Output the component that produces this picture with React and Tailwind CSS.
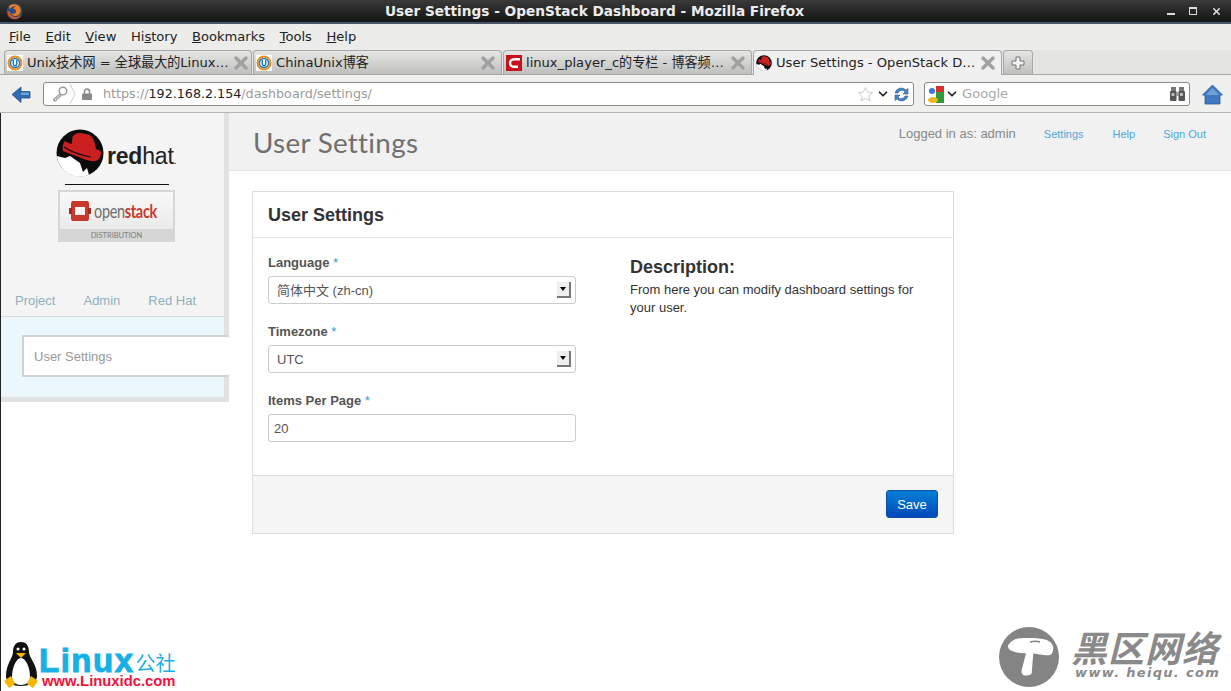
import { ChevronDown, X } from "lucide-react";

const dejavu = "font-['DejaVu_Sans','Noto_Sans_CJK_SC',sans-serif]";
const arial = "font-['Liberation_Sans','Noto_Sans_CJK_SC',sans-serif]";

function UnixIcon() {
  return (
    <svg width="16" height="16" viewBox="0 0 16 16" className="shrink-0">
      <rect width="16" height="16" fill="#fff" />
      <circle cx="8" cy="8" r="6.5" fill="none" stroke="#f08a1d" strokeWidth="2" />
      <circle cx="8" cy="8" r="4.6" fill="none" stroke="#1e78b8" strokeWidth="1.5" />
      <path d="M6.3 5v4a1.7 1.7 0 0 0 3.4 0V5" fill="none" stroke="#1e78b8" strokeWidth="1.5" />
    </svg>
  );
}

function CsdnIcon() {
  return (
    <div className="flex h-4 w-4 shrink-0 items-center justify-center bg-[#c8101a]">
      <svg width="14" height="12" viewBox="0 0 14 12">
        <path d="M13 2.2H7C4.5 2.2 3 4 3 6s1.500 3.800 4 3.800h4" fill="none" stroke="#fff" strokeWidth="2.400" />
      </svg>
    </div>
  );
}

function HatIcon({ size = 16 }) {
  return (
    <svg width={size} height={size} viewBox="0 0 48 48" className="shrink-0">
      <circle cx="24" cy="24" r="23.500" fill="#0b0b0b" />
      <path d="M.7 27 9 29l5-2 10 7 3 9 4-4 2 7A23.500 23.500 0 0 1 .7 27z" fill="#fff" />
      <path d="M17 7c2-2 4-3 6-3 4 0 9 1 12 3 3 3 4 8 5 13 3 1 6 2 5 5-1 4-3 7-6 7-5 1-11-2-16-4-6-2-11-4-16-6-1-4 0-8 2-10 2 1 5 3 7 3 0-3 0-6 1-8z" fill="#cc1f1f" />
      <path d="M8 18c6 4 16 8 27 10" fill="none" stroke="#0b0b0b" strokeWidth="1.200" />
    </svg>
  );
}

function BackIcon() {
  return (
    <svg width="20" height="20" viewBox="0 0 20 20">
      <path d="M1 10.500 10 3v4.500h9v6.500h-9v4.500z" fill="#2f6cb0" stroke="#234f86" strokeWidth=".8" />
      <path d="M10 8.500h8v2.500h-8z" fill="#6a9fd8" />
    </svg>
  );
}

function FirefoxIcon() {
  return (
    <svg width="17" height="17" viewBox="0 0 17 17">
      <circle cx="8.500" cy="8.500" r="8" fill="#2b4a83" />
      <path d="M3 3c0 2 .5 2.500 1 3 1-2 4-3.500 6-2.500-2 .5-2.500 1.500-2.500 2.500 2 0 3 1.500 2.500 3-.5 2-3.500 2.500-5 1 1 3 5 4 7.500 2 2-1.500 2.800-4.500 1.500-7.500C12.500 1.500 7 0 3 3z" fill="#ef7d1a" />
      <path d="M1.500 8.500c0 4 3 7.500 7 7.500s6-2 7-5c-1.500 2.500-4 3.500-6.500 3-3-.5-5.500-3-5-6z" fill="#d9531e" />
    </svg>
  );
}

function Tab({ icon, title, active, width }) {
  return (
    <div
      className={`flex h-[24px] items-center gap-[2px] rounded-t-[4px] border border-b-0 border-[#a8a8a8] pl-[2px] pr-[3px] text-[13.100px] ${width} ${
        active ? "bg-[#f0f0f0]" : "bg-gradient-to-b from-[#e6e6e4] to-[#bfbfbd]"
      }`}
    >
      {icon}
      <span className="ml-[2px] flex-1 whitespace-nowrap text-[#222]">{title}</span>
      <X size={20} strokeWidth={4} className="shrink-0 text-[#a0a0a0]" />
    </div>
  );
}

function BrowserChrome() {
  return (
    <div className={`${dejavu} shrink-0`}>
      <div className="flex h-[24px] items-center border-b-2 border-[#46566a] bg-gradient-to-b from-[#3a3a3a] to-[#141414] pl-[6px] pr-[9px]">
        <FirefoxIcon />
        <div className="flex-1 pr-[1px] text-center text-[13.670px] font-bold text-[#ececec]">
          User Settings - OpenStack Dashboard - Mozilla Firefox
        </div>
        <div className="flex items-center gap-[14px] text-[#ddd]">
          <div className="mt-[6px] h-[2px] w-[8px] bg-[#ddd]" />
          <div className="h-[8px] w-[8px] border border-t-2 border-[#ddd]" />
          <X size={11} strokeWidth={3.500} />
        </div>
      </div>
      <div className="flex h-[26px] items-center gap-[14.500px] bg-[#ececea] pl-[9px] text-[13.100px] text-[#222]">
        <span><u>F</u>ile</span>
        <span><u>E</u>dit</span>
        <span><u>V</u>iew</span>
        <span>Hi<u>s</u>tory</span>
        <span><u>B</u>ookmarks</span>
        <span><u>T</u>ools</span>
        <span><u>H</u>elp</span>
      </div>
      <div className="flex h-[25px] items-end gap-[1px] border-b border-[#a8a8a8] bg-[#e4e4e2] pl-[3px]">
        <Tab icon={<UnixIcon />} title="Unix技术网 = 全球最大的Linux…" width="w-[248px] ml-[1px]" />
        <Tab icon={<UnixIcon />} title="ChinaUnix博客" width="w-[249px]" />
        <Tab icon={<CsdnIcon />} title="linux_player_c的专栏 - 博客频…" width="w-[249px]" />
        <Tab icon={<HatIcon />} title="User Settings - OpenStack D…" width="w-[249px] -mb-[1px] h-[25px]" active />
        <div className="flex h-[24px] w-[30px] items-center justify-center rounded-t-[4px] border border-b-0 border-[#a8a8a8] bg-gradient-to-b from-[#e6e6e4] to-[#bfbfbd]">
          <svg width="14" height="14" viewBox="0 0 14 14">
            <path d="M5 1h4v4h4v4H9v4H5V9H1V5h4z" fill="#f2f2f2" stroke="#777" />
          </svg>
        </div>
      </div>
      <div className="flex h-[38px] items-center border-b border-[#b5b5b5] bg-[#efefed] pl-[11px] pr-[7px] pt-[1px]">
        <BackIcon />
        <div className="ml-[12px] flex h-[24px] w-[871px] items-center rounded-[3px] border border-[#8a8a8a] bg-white pl-[7px] pr-[3px] text-[14px]">
          <svg width="18" height="16" viewBox="0 0 18 16" className="shrink-0">
            <circle cx="12" cy="5" r="3.800" fill="none" stroke="#999" strokeWidth="1.400" />
            <path d="M9 8 2.500 13.500l1 1.500 2-1 .5-1.500 1.500-.5 3-3" fill="none" stroke="#999" strokeWidth="1.300" />
          </svg>
          <svg width="8" height="22" viewBox="0 0 8 22" className="shrink-0">
            <path d="M1 1l5 10-5 10" fill="none" stroke="#ccc" />
          </svg>
          <svg width="10" height="12" viewBox="0 0 10 12" className="ml-[5px] shrink-0">
            <path d="M2.500 6V3.500a2.500 2.500 0 0 1 5 0V6" fill="none" stroke="#888" strokeWidth="1.500" />
            <rect y="5.500" width="10" height="6.500" rx="1" fill="#888" />
          </svg>
          <div className="ml-[11px] flex-1 whitespace-nowrap text-[12.700px] text-[#9a9a9a]">
            https://<span className="text-[#222]">192.168.2.154</span>/dashboard/settings/
          </div>
          <svg width="17" height="17" viewBox="0 0 17 17" className="shrink-0">
            <path d="m8.500 1.500 2.100 4.600 5 .5-3.800 3.300 1.100 5-4.400-2.600-4.400 2.600 1.100-5L1.400 6.600l5-.5z" fill="#fff" stroke="#ccc" />
          </svg>
          <ChevronDown size={14} strokeWidth={3} className="ml-[2px] text-[#222]" />
          <svg width="17" height="17" viewBox="0 0 17 17" className="ml-[3px] shrink-0">
            <path d="M2 7a6.500 6.500 0 0 1 11-3l2-1.500V8h-5l2-2A4 4 0 0 0 5 7z" fill="#4b82bd" stroke="#2c5f9a" strokeWidth=".6" />
            <path d="M15 10A6.500 6.500 0 0 1 4 13l-2 1.500V9h5l-2 2a4 4 0 0 0 7-1z" fill="#4b82bd" stroke="#2c5f9a" strokeWidth=".6" />
          </svg>
        </div>
        <div className="ml-[10px] flex h-[24px] w-[266px] items-center rounded-[3px] border border-[#8a8a8a] bg-white pl-[3px] pr-[2px] text-[13.100px]">
          <svg width="16" height="17" viewBox="0 0 16 17" className="shrink-0">
            <rect width="16" height="17" rx="1" fill="#fff" />
            <rect x="8" width="8" height="6" fill="#d9302a" />
            <rect x="8" y="6" width="8" height="11" fill="#2f9a3a" />
            <circle cx="4" cy="5" r="3" fill="#3b78d8" />
            <ellipse cx="5" cy="14" rx="5" ry="3" fill="#f0b41e" />
          </svg>
          <ChevronDown size={14} strokeWidth={3} className="ml-[1px] text-[#222]" />
          <span className="ml-[3px] flex-1 text-[#a9a9a9]">Google</span>
          <svg width="17" height="16" viewBox="0 0 17 16" className="mr-[1px] shrink-0">
            <rect x="2" y="1" width="5" height="5" fill="#777" />
            <rect x="10" y="1" width="5" height="5" fill="#777" />
            <rect x="1" y="5" width="6.500" height="10" rx="1" fill="#555" />
            <rect x="9.500" y="5" width="6.500" height="10" rx="1" fill="#555" />
            <rect x="7" y="6" width="3" height="4" fill="#999" />
            <rect x="2.500" y="7" width="3" height="3" fill="#bbb" />
            <rect x="11" y="7" width="3" height="3" fill="#bbb" />
          </svg>
        </div>
        <svg width="21" height="21" viewBox="0 0 21 21" className="ml-[12px]">
          <path d="M10.500 1 20.500 11H18v9H3v-9H.5z" fill="#3f78bd" stroke="#2a5a98" strokeWidth=".8" />
          <path d="M3.500 11 10.500 4l7 7z" fill="#6fa0d8" />
        </svg>
      </div>
    </div>
  );
}

function Sidebar() {
  return (
    <div className="flex h-[289px] w-[228px] shrink-0 flex-col border-r-[5px] border-b-[5px] border-[#e1e1e1] bg-[#f4f4f4]">
      <div className="flex h-[71px] items-center pl-[55px] pt-[8px]">
        <HatIcon size={48} />
        <span className="ml-[3px] mt-[7px] font-['Liberation_Sans',sans-serif] text-[23px] leading-none tracking-[-.2px] text-[#222]">
          <b>red</b>hat<span className="text-[11px]">.</span>
        </span>
      </div>
      <div className="ml-[64px] h-px w-[104px] bg-[#111]" />
      <div className="ml-[57px] mt-[5px] flex h-[52px] w-[117px] flex-col bg-[#d6d6d6] p-[2px] pb-0">
        <div className="flex h-[37px] items-center bg-gradient-to-b from-[#f8f8f8] to-[#eaeaea] pl-[9px]">
          <svg width="22" height="22" viewBox="0 0 22 22" className="shrink-0">
            <path d="M3 1h16l1 2v16l-1 2H3l-1-2V3z" fill="#c9382c" />
            <path d="M6 7h10v8H6z" fill="#f4f4f4" />
            <path d="M0 8h3v6H0zM19 8h3v6h-3z" fill="#a32a20" />
          </svg>
          <span className="ml-[3px] inline-block origin-left scale-x-[.76] font-['Lato',sans-serif] text-[19px] leading-none tracking-[-.4px] text-[#6d6d6d]">
            open<span className="font-bold text-[#c9382c]">stack</span>
          </span>
        </div>
        <div className="flex flex-1 items-center justify-center font-['Lato',sans-serif] text-[7.500px] text-[#7d7d7d]">
          DISTRIBUTION
        </div>
      </div>
      <div className="mt-[49px] flex h-[26px] items-start gap-[28px] border-b border-[#dcdcdc] pl-[14px] text-[13px] text-[#8eb0bd]">
        <span>Project</span>
        <span>Admin</span>
        <span>Red Hat</span>
      </div>
      <div className="flex flex-1 items-start bg-[#ecf7fd] pl-[21px] pt-[18px]">
        <div className="-mr-[5px] flex h-[42px] flex-1 items-center border-2 border-r-0 border-[#d3d3d3] bg-white pl-[10px] pt-[1px] text-[13px] text-[#999]">
          User Settings
        </div>
      </div>
    </div>
  );
}

function Field({ label, children }) {
  return (
    <div className="mb-[18px]">
      <div className="mb-[4px] h-[19px] text-[13px] leading-[20px] font-bold text-[#555]">
        {label} <span className="font-normal text-[#3a9ad0]">*</span>
      </div>
      {children}
    </div>
  );
}

function SelectBox({ value }) {
  return (
    <div className="flex h-[28px] w-[308px] items-center rounded-[3px] border border-[#cccccc] bg-white pl-[8px] pr-[4px] text-[13px] text-[#555]">
      <span className="flex-1 pt-[1px]">{value}</span>
      <div className="flex h-[16px] w-[14px] items-center justify-center border-r-2 border-b-2 border-[#777] bg-[#efefef]">
        <div className="h-0 w-0 border-x-[3px] border-t-[4px] border-x-transparent border-t-black" />
      </div>
    </div>
  );
}

function SettingsCard() {
  return (
    <div className="ml-[23px] mt-[20px] w-[702px] border border-[#dddddd]">
      <div className="flex h-[46px] items-center border-b border-[#e6e6e6] pl-[15px] pt-[2px] text-[18px] font-bold text-[#333]">
        User Settings
      </div>
      <div className="flex h-[237px] pl-[15px] pt-[15px]">
        <div className="w-[362px]">
          <Field label="Language">
            <SelectBox value="简体中文 (zh-cn)" />
          </Field>
          <Field label="Timezone">
            <SelectBox value="UTC" />
          </Field>
          <Field label="Items Per Page">
            <div className="flex h-[28px] w-[308px] items-center rounded-[3px] border border-[#cccccc] bg-white pl-[5px] pt-[1px] text-[13px] text-[#555]">
              20
            </div>
          </Field>
        </div>
        <div className="w-[300px] pt-[2px] text-[13px] leading-[18px] text-[#333]">
          <div className="mb-[2px] text-[18px] leading-[24px] font-bold">Description:</div>
          From here you can modify dashboard settings for your user.
        </div>
      </div>
      <div className="flex h-[58px] items-center justify-end border-t border-[#dddddd] bg-[#f5f5f5] pr-[15px]">
        <div className="mb-[1px] flex h-[28px] w-[52px] items-center justify-center rounded-[3px] border border-[#0850a8] bg-gradient-to-b from-[#0a7fd6] to-[#0448b8] pt-[2px] text-[13px] text-white">
          Save
        </div>
      </div>
    </div>
  );
}

function Watermarks() {
  return (
    <>
      <div className="absolute bottom-0 left-[3px] flex h-[50px] w-[178px]">
        <svg width="36" height="48" viewBox="0 0 36 48" className="shrink-0">
          <path d="M18 1c6 0 8 5 8 10 0 6 8 12 8 24 0 6-6 10-16 10S3 41 3 35C3 23 10 17 10 11c0-5 2-10 8-10z" fill="#111" />
          <path d="M18 17c5 0 9 10 9 19 0 5-4 8-9 8s-9-3-9-8c0-9 4-19 9-19z" fill="#fff" />
          <path d="M13 12h10l-5 5z" fill="#f5b800" />
          <circle cx="15" cy="8" r="1.500" fill="#fff" />
          <circle cx="21" cy="8" r="1.500" fill="#fff" />
          <path d="M1 40l7-5 4 8-6 4zM35 40l-7-5-4 8 6 4z" fill="#f5b800" />
        </svg>
        <div className="flex flex-col pt-[8px] leading-none">
          <div className="flex h-[24px] items-center whitespace-nowrap">
            <span className="font-['Liberation_Sans',sans-serif] text-[33px] leading-[24px] font-bold tracking-[1.500px] text-[#17b0e6] [-webkit-text-stroke:1px_#17b0e6]">Linux</span>
            <span className="ml-[1px] mt-[4px] font-['Noto_Sans_CJK_SC',sans-serif] text-[20px] leading-[20px] text-[#17b0e6]">公社</span>
          </div>
          <div className="ml-[3px] mt-[1px] whitespace-nowrap font-['Liberation_Sans',sans-serif] text-[14.800px] leading-[15px] font-bold text-[#f0123c]">
            www.Linuxidc.com
          </div>
        </div>
      </div>
      <div className="absolute bottom-[4px] right-[11px] flex items-start">
        <svg width="60" height="60" viewBox="0 0 60 60" className="shrink-0">
          <circle cx="30" cy="30" r="30" fill="#848484" />
          <path d="M9.300 18C12 14 16 11.500 21 11.300c9-.5 20-.5 26.700 1.700 4 1.500 6.800 5 6.600 8.300-.2 3.500-1.300 6.200-3.300 6.700-5 .8-11-.5-16.700-1.700L32.700 46.300c-.5 2-6 3-8.400 1.700-1.500-1-2-3-1.600-5L27 26.300c-6 0-12-1-16-3.300-1.500-1-2.500-3.500-1.700-5z" fill="#fff" />
          <path d="M31 15c3-1 7-1 10 0" fill="none" stroke="#848484" strokeWidth="1.500" />
        </svg>
        <div className="ml-[12px] flex flex-col items-start pt-[1px]">
          <span className="font-['Noto_Sans_CJK_SC',sans-serif] text-[36px] leading-[36px] font-bold italic tracking-[1px] text-[#8a8a8a]">黑区网络</span>
          <span className="ml-[4px] mt-[2px] font-['DejaVu_Sans',sans-serif] text-[13px] leading-[14px] font-bold italic tracking-[1.300px] text-[#8a8a8a]">www. heiqu. com</span>
        </div>
      </div>
    </>
  );
}

export default function App() {
  return (
    <div className="relative flex h-[691px] w-[1231px] flex-col overflow-hidden bg-white">
      <BrowserChrome />
      <div className={`${arial} flex flex-1 border-l border-[#222]`}>
        <Sidebar />
        <div className="flex-1">
          <div className="flex h-[58px] items-start justify-between border-b border-[#e6e6e6] bg-[#f1f1f1] pl-[24px] pr-[25px]">
            <div className="mt-[12px] font-['Lato',sans-serif] text-[27.800px] leading-[36px] tracking-[.3px] text-[#6f6f6f]">User Settings</div>
            <div className="mt-[11px] flex items-center text-[11px] text-[#4ea6dc]">
              <span className="mr-[28px] text-[13px] text-[#888]">Logged in as: admin</span>
              <span className="mr-[29px]">Settings</span>
              <span className="mr-[28px]">Help</span>
              <span>Sign Out</span>
            </div>
          </div>
          <SettingsCard />
        </div>
      </div>
      <Watermarks />
    </div>
  );
}
